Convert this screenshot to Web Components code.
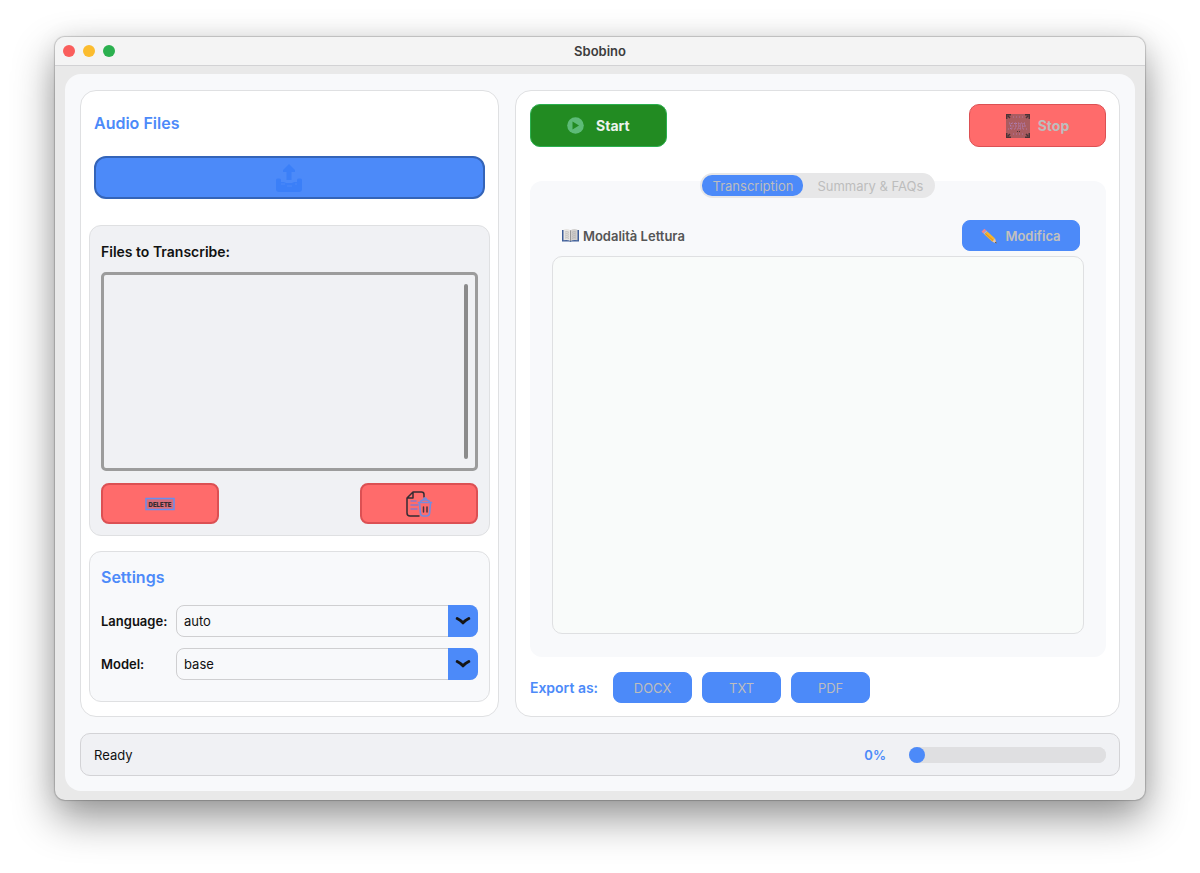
<!DOCTYPE html>
<html lang="it">
<head>
<meta charset="utf-8">
<meta name="viewport" content="width=device-width, initial-scale=1">
<title>Sbobino</title>
<style>
	:root {
		--blue: #4c8af9;
		--blue-dark: #3464b8;
		--red: #ff6b6b;
		--red-dark: #dc5053;
		--green: #228b22;
		--page: #f8f9fb;
		--group: #f0f1f4;
		--line: #dfe0e2;
		--muted: #bdbdbd;
	}

	body {
		margin: 0;
		min-height: 100vh;
		box-sizing: border-box;
		padding: 37px 55px 73px;
		display: flex;
		background: #fff;
		color: #111;
		font-family: Inter, "Liberation Sans", sans-serif;
		font-size: 13px;
		line-height: 16px;
	}
</style>
</head>
<body>
<sbobino-app></sbobino-app>

<script>
// Window frame with the title bar
class AppWindow extends HTMLElement {
  connectedCallback() {
    this.attachShadow({ mode: 'open' }).innerHTML = `
<style>
	:host {
		flex: 1;
		display: flex;
		flex-direction: column;
		background: #e9e9e9;
		border-radius: 10px;
		box-shadow: 0 0 1px 1px rgba(0, 0, 0, 0.18), 0 18px 42px rgba(0, 0, 0, 0.42), 0 0 24px rgba(0, 0, 0, 0.06);
	}
	header {
		display: grid;
		grid-template-columns: 1fr auto 1fr;
		align-items: center;
		height: 28px;
		padding: 0 8px;
		background: #f4f4f4;
		border-bottom: 1px solid #d2d2d4;
		border-radius: 10px 10px 0 0;
	}
	.lights {
		display: flex;
		gap: 8px;
	}
	.lights i {
		width: 12px;
		height: 12px;
		border-radius: 50%;
		background: #fa5e5c;
	}
	.lights i:nth-child(2) { background: #fbbc2e; }
	.lights i:nth-child(3) { background: #2bb04f; }
	h1 {
		margin: 0;
		font-size: 13px;
		font-weight: 600;
		color: #3c3c3c;
	}
	main {
		flex: 1;
		display: flex;
		flex-direction: column;
		gap: 16px;
		margin: 8px 10px 9px;
		padding: 16px 15px 15px;
		background: var(--page);
		border-radius: 16px;
	}
</style>
<header>
  <div class="lights"><i></i><i></i><i></i></div>
  <h1><slot name="title"></slot></h1>
</header>
<main><slot></slot></main>
`;
  }
}

// Coloured push button, variant is one of upload, red, stop, green
class AppButton extends HTMLElement {
  connectedCallback() {
    const label = this.getAttribute('label');
    this.attachShadow({ mode: 'open' }).innerHTML = `
<style>
	:host { display: block; }
	button {
		display: flex;
		align-items: center;
		justify-content: center;
		gap: 8px;
		box-sizing: border-box;
		width: 100%;
		height: 100%;
		margin: 0;
		padding: 0;
		border: 1px solid var(--blue);
		border-radius: 8px;
		background: var(--blue);
		color: var(--muted);
		font: inherit;
	}
	:host([variant="upload"]) button {
		border: 2px solid var(--blue-dark);
		border-radius: 12px;
	}
	:host([variant="red"]) button {
		border: 2px solid var(--red-dark);
		background: var(--red);
	}
	:host([variant="stop"]) button {
		border-color: var(--red-dark);
		border-radius: 10px;
		background: var(--red);
	}
	:host([variant="green"]) button {
		gap: 12px;
		border-color: #2bb04f;
		border-radius: 10px;
		background: var(--green);
		color: #eef3ee;
	}
</style>
<button type="button" ${label ? `aria-label="${label}"` : ''} ${this.hasAttribute('disabled') ? 'disabled' : ''}><slot></slot></button>
`;
  }
}

// Labelled drop-down
class AppSelect extends HTMLElement {
  connectedCallback() {
    const options = this.getAttribute('options').split(',');
    this.attachShadow({ mode: 'open' }).innerHTML = `
<style>
	:host {
		display: grid;
		grid-template-columns: 67px 1fr;
		align-items: center;
		gap: 8px;
	}
	label {
		font-weight: 600;
		white-space: nowrap;
	}
	.field {
		display: grid;
		height: 32px;
	}
	.field > * { grid-area: 1 / 1; }
	select {
		appearance: none;
		width: 100%;
		margin: 0;
		padding: 0 38px 0 7px;
		border: 1px solid #cfcfd1;
		border-radius: 8px;
		background: var(--page);
		color: #111;
		font: inherit;
	}
	.arrow {
		justify-self: end;
		display: flex;
		align-items: center;
		justify-content: center;
		width: 30px;
		border-radius: 0 8px 8px 0;
		background: var(--blue);
		pointer-events: none;
	}
</style>
<label for="field">${this.getAttribute('label')}</label>
<div class="field">
  <select id="field">${options.map((o) => `<option>${o}</option>`).join('')}</select>
  <span class="arrow">
    <svg width="16" height="10" viewBox="0 0 16 10" fill="none" stroke="#151515" stroke-width="3" stroke-linecap="round" stroke-linejoin="round"><path d="M2.200 2.500Q5.500 4 8 6.800 10.500 4 13.800 2.500"/></svg>
  </span>
</div>
`;
  }
}

// Left column: upload, queue of files, settings
class AudioPanel extends HTMLElement {
  connectedCallback() {
    this.attachShadow({ mode: 'open' }).innerHTML = `
<style>
	:host {
		display: flex;
		flex-direction: column;
		padding: 20px 8px 14px;
		border: 1px solid var(--line);
		border-radius: 16px;
		background: #fff;
	}
	h2 {
		margin: 0;
		font-size: 16px;
		line-height: 24px;
		font-weight: 600;
		color: var(--blue);
	}
	.top { padding: 0 5px; }
	.upload {
		height: 43px;
		margin: 21px 0 26px;
	}
	.files, .settings {
		border: 1px solid var(--line);
		border-radius: 12px;
	}
	.files {
		flex: 1;
		display: flex;
		flex-direction: column;
		gap: 12px;
		margin-bottom: 15px;
		padding: 17px 11px 11px;
		background: var(--group);
	}
	h3 {
		margin: 0;
		font-size: 14px;
		line-height: 17px;
		font-weight: 600;
	}
	.list {
		flex: 1;
		display: flex;
		justify-content: flex-end;
		padding: 9px 7px;
		border: 3px solid #9c9c9c;
		border-radius: 5px;
	}
	.thumb {
		width: 4px;
		border-radius: 2px;
		background: #8b8b8b;
	}
	.row {
		display: flex;
		justify-content: space-between;
	}
	.row app-button {
		width: 118px;
		height: 41px;
	}
	.settings {
		display: flex;
		flex-direction: column;
		gap: 11px;
		padding: 13px 11px 21px;
		background: var(--page);
	}
	.settings h2 { margin-bottom: 5px; }
</style>
<div class="top">
  <h2>Audio Files</h2>
  <app-button class="upload" variant="upload" label="Upload audio">
    <svg width="26" height="28" viewBox="0 0 26 28" fill="#3b7ff8"><path d="M13 0 19 6v2h-3.500v8h-5V8H7V6Z"/><path d="M0 16q0-1.500 1.500-1.500h2Q5 14.500 5 16v2h3l2 1h6l2-1h3v-2q0-1.500 1.500-1.500h2Q26 14.500 26 16v9q0 3-3 3H3q-3 0-3-3Z"/><path d="M5 20h4m2 2h5m3-2h2" stroke="#4c8af9" fill="none"/></svg>
  </app-button>
</div>
<section class="files">
  <h3>Files to Transcribe:</h3>
  <div class="list" role="listbox" aria-label="Files to Transcribe"><div class="thumb"></div></div>
  <div class="row">
    <app-button variant="red" label="Delete">
      <svg width="30" height="14" viewBox="0 0 30 14"><rect x="1" y="1.500" width="28" height="11" fill="#d76d7b" stroke="#668ff0" stroke-width="1.500"/><text x="15" y="9.500" text-anchor="middle" font-size="6" font-weight="900" fill="#332b30">DELETE</text></svg>
    </app-button>
    <app-button variant="red" label="Delete all">
      <svg width="28" height="28" viewBox="0 0 28 28" fill="none" stroke-linecap="round" stroke-linejoin="round">
        <path d="M19 7V4.500Q19 2 16.500 2H8L2 8v15q0 3 3 3h9M8 2v6H2" stroke="#352d33" stroke-width="1.500"/>
        <path d="M6 11h5M6 15h7M6 19h6" stroke="#8b78c7" stroke-width="1.500"/>
        <path d="M13.500 12.500h13M15 12.500q1-2.500 3.500-2.500h3q2.500 0 3.500 2.500M18.500 10q0-2 1.500-2t1.500 2M14.500 13.500l1 10q.3 2.500 3 2.500h3q2.700 0 3-2.500l1-10" stroke="#768bdc" stroke-width="1.700"/>
        <path d="M18.500 17v5M22 17v5" stroke="#4a333c" stroke-width="1.500"/>
      </svg>
    </app-button>
  </div>
</section>
<section class="settings">
  <h2>Settings</h2>
  <app-select label="Language:" options="auto"></app-select>
  <app-select label="Model:" options="base"></app-select>
</section>
`;
  }
}

// Right column: start/stop, tabs, text area, export
class TranscriptPanel extends HTMLElement {
  connectedCallback() {
    this.attachShadow({ mode: 'open' }).innerHTML = `
<style>
	:host {
		display: flex;
		flex-direction: column;
		padding: 13px 13px 13px 14px;
		border: 1px solid var(--line);
		border-radius: 16px;
		background: #fff;
	}
	.actions {
		display: flex;
		justify-content: space-between;
		margin-bottom: 26px;
		font-size: 14px;
		font-weight: 700;
	}
	.actions app-button {
		width: 137px;
		height: 43px;
	}
	.tabs {
		align-self: center;
		display: flex;
		gap: 4px;
		z-index: 1;
		margin-bottom: -17px;
		padding: 2px;
		border-radius: 13px;
		background: #e7e7e8;
	}
	.tabs button {
		height: 21px;
		margin: 0;
		padding: 0 10px;
		border: 0;
		border-radius: 10px;
		background: none;
		color: var(--muted);
		font: inherit;
	}
	.tabs button[aria-selected="true"] {
		background: var(--blue);
	}
	.body {
		flex: 1;
		display: flex;
		flex-direction: column;
		padding: 39px 22px 23px;
		border-radius: 12px;
		background: var(--page);
	}
	.bar {
		display: flex;
		align-items: center;
		justify-content: space-between;
		margin-bottom: 5px;
		padding: 0 4px 0 10px;
		font-weight: 600;
	}
	.bar label {
		display: flex;
		align-items: center;
		gap: 4px;
		color: #555;
	}
	.bar app-button {
		width: 118px;
		height: 31px;
		--muted: #c3c1bd;
	}
	textarea {
		flex: 1;
		resize: none;
		margin: 0;
		padding: 12px;
		border: 1px solid var(--line);
		border-radius: 10px;
		background: #f9fbfa;
		color: #111;
		font: inherit;
	}
	.export {
		display: flex;
		align-items: center;
		gap: 10px;
		margin-top: 15px;
	}
	.export span {
		margin-right: 5px;
		font-size: 14px;
		font-weight: 600;
		color: var(--blue);
	}
	.export app-button {
		width: 79px;
		height: 31px;
	}
</style>
<div class="actions">
  <app-button variant="green">
    <svg width="17" height="17" viewBox="0 0 17 17"><circle cx="8.500" cy="8.500" r="8.300" fill="#5dbb78"/><path d="M5.500 4.500v8L12 8.500Z" fill="#228b22"/></svg>
    Start
  </app-button>
  <app-button variant="stop" disabled>
    <svg width="24" height="24" viewBox="0 0 24 24" fill="none">
      <path fill="#a95c60" d="M0 0h24v24H0z"/>
      <path d="M.7 5V.7H5M19 .7h4.300V5M23.300 19v4.300H19M5 23.300H.7V19M2 2l2 2m18-2-2 2M2 22l2-2m18 2-2-2" stroke="#4a3436" stroke-width="1.500"/>
      <path d="M3 9h18M2 15h20M4 12h16M7 3h11M7 20h11" stroke="#b277a3" stroke-dasharray="1 2"/>
      <path d="M6 9.500H4v2h2v3H4m4-5h3m-1.500 0v5m3-5h2v5h-2zm4 5v-5h2v3h-2" stroke="#ad7cae" stroke-dasharray="1 1"/>
      <path d="M11 17.500h3" stroke="#4a3436" stroke-dasharray="1 1"/>
    </svg>
    Stop
  </app-button>
</div>
<div class="tabs" role="tablist">
  <button type="button" role="tab" aria-selected="true" disabled>Transcription</button>
  <button type="button" role="tab" aria-selected="false" disabled>Summary &amp; FAQs</button>
</div>
<div class="body" role="tabpanel">
  <div class="bar">
    <label for="text">
      <svg width="17" height="13" viewBox="0 0 17 13"><path d="M0 1h2v10h13V1h2v11.500H9.500L8.500 13l-1-.5H0Z" fill="#3e5e99"/><path d="M1.500.7Q5-.7 8.500 1.300V12Q5 10.300 1.500 11.300Z" fill="#e7e5e2"/><path d="M8.500 1.300Q12-.7 15.500.7v10.600Q12 10.300 8.500 12Z" fill="#d2d0ce"/><path d="M3 3q2-.7 4 .3M3 5q2-.7 4 .3M3 7q2-.7 4 .3M3 9q2-.7 4 .3M10 3.300Q12 2.300 14 3M10 5.300Q12 4.300 14 5M10 7.300Q12 6.300 14 7M10 9.300Q12 8.300 14 9" stroke="#a9a9a9" stroke-width=".7" fill="none"/><path d="M8.500 1.300V12" stroke="#777" stroke-width=".7"/></svg>
      Modalità Lettura
    </label>
    <app-button disabled>
      <svg width="16" height="16" viewBox="0 0 16 16"><path d="M.5 3.700 3.300.7 5.300 2.500 2.500 5.600Z" fill="#ee8592"/><path d="M2.500 5.600 5.300 2.500 6.300 3.400 3.500 6.600Z" fill="#b9bcc1"/><path d="M3.500 6.600 6.300 3.400 14 10.500 11.300 13.700Z" fill="#f7b52c"/><path d="M4.500 5.500 12.300 12.600" stroke="#dc8c20"/><path d="M11.300 13.700 14 10.500 15.600 15.400Z" fill="#edc8a0"/><path d="M14 14.800 15 13.500 15.600 15.400Z" fill="#333"/></svg>
      Modifica
    </app-button>
  </div>
  <textarea id="text" readonly></textarea>
</div>
<div class="export">
  <span>Export as:</span>
  <app-button disabled>DOCX</app-button>
  <app-button disabled>TXT</app-button>
  <app-button disabled>PDF</app-button>
</div>
`;
  }
}

// Bottom bar with message and progress
class StatusBar extends HTMLElement {
  connectedCallback() {
    const value = this.getAttribute('value');
    this.attachShadow({ mode: 'open' }).innerHTML = `
<style>
	:host {
		display: flex;
		align-items: center;
		height: 41px;
		padding: 0 13px;
		border: 1px solid #d3d3d6;
		border-radius: 10px;
		background: var(--group);
	}
	label {
		margin: 0 23px 0 auto;
		font-weight: 600;
		color: var(--blue);
	}
	progress {
		appearance: none;
		display: block;
		width: 197px;
		height: 16px;
		border: 0;
		border-radius: 8px;
		background: #dfdfe1;
	}
	progress::-webkit-progress-bar {
		border-radius: 8px;
		background: #dfdfe1;
	}
	progress::-webkit-progress-value {
		min-width: 16px;
		border-radius: 8px;
		background: var(--blue);
	}
</style>
<span><slot></slot></span>
<label for="progress">${value}%</label>
<progress id="progress" value="${value}" max="100"></progress>
`;
  }
}

class SbobinoApp extends HTMLElement {
  connectedCallback() {
    this.attachShadow({ mode: 'open' }).innerHTML = `
<style>
	:host {
		flex: 1;
		display: flex;
	}
	.columns {
		flex: 1;
		display: grid;
		grid-template-columns: 9fr 13fr;
		gap: 16px;
	}
</style>
<app-window>
  <span slot="title">Sbobino</span>
  <div class="columns">
    <audio-panel></audio-panel>
    <transcript-panel></transcript-panel>
  </div>
  <status-bar value="0">Ready</status-bar>
</app-window>
`;
  }
}

customElements.define('app-window', AppWindow);
customElements.define('app-button', AppButton);
customElements.define('app-select', AppSelect);
customElements.define('audio-panel', AudioPanel);
customElements.define('transcript-panel', TranscriptPanel);
customElements.define('status-bar', StatusBar);
customElements.define('sbobino-app', SbobinoApp);
</script>
</body>
</html>
